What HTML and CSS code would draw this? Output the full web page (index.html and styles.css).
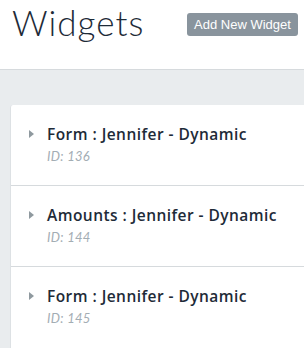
FILE: index.html
```html
<!DOCTYPE html>
<html>
<head>
<meta charset="utf-8">
<link rel="stylesheet" href="styles.css">
</head>
<body>
<header class="header">
  <h1 class="title">Widgets</h1>
  <button class="add-btn">Add New Widget</button>
</header>
<main class="content">
  <div class="card">
    <div class="row">
      <span class="caret"></span>
      <div class="info">
        <div class="name">Form : Jennifer - Dynamic</div>
        <div class="id">ID: 136</div>
      </div>
    </div>
    <div class="row">
      <span class="caret"></span>
      <div class="info">
        <div class="name">Amounts : Jennifer - Dynamic</div>
        <div class="id">ID: 144</div>
      </div>
    </div>
    <div class="row">
      <span class="caret"></span>
      <div class="info">
        <div class="name">Form : Jennifer - Dynamic</div>
        <div class="id">ID: 145</div>
      </div>
    </div>
  </div>
</main>
</body>
</html>
```

FILE: styles.css
```css
html, body {
  margin: 0;
  padding: 0;
  background: #ffffff;
  overflow: hidden;
}
body {
  width: 304px;
  height: 354px;
  font-family: Lato, "Open Sans", sans-serif;
}
.header {
  height: 70px;
  box-sizing: border-box;
  border-bottom: 1px solid #d6dadd;
  display: flex;
  align-items: flex-start;
  padding: 0 6px 0 12px;
  justify-content: space-between;
}
.title {
  margin: 0;
  font-family: Lato, sans-serif;
  font-weight: 300;
  font-size: 35px;
  line-height: 44px;
  color: #1e2b38;
  letter-spacing: 1px;
}
.add-btn {
  margin-top: 13px;
  height: 23px;
  width: 111px;
  border: none;
  border-radius: 3px;
  background: #89949d;
  color: #ffffff;
  font-family: "Liberation Sans", Arial, sans-serif;
  font-size: 13px;
  padding: 0;
}
.content {
  background: #e9ecee;
  padding: 35px 0 0 10px;
  height: 278px;
  box-sizing: border-box;
}
.card {
  background: #ffffff;
  border-radius: 3px 0 0 0;
  border-left: 1px solid #dde1e4;
  height: 243px;
}
.row {
  display: flex;
  align-items: flex-start;
  height: 81px;
  box-sizing: border-box;
  border-bottom: 1px solid #d6dadd;
  padding: 20px 0 0 18px;
}
.row:last-child {
  border-bottom: none;
}
.caret {
  width: 0;
  height: 0;
  border-top: 4px solid transparent;
  border-bottom: 4px solid transparent;
  border-left: 5px solid #8f999f;
  margin-top: 5px;
  margin-right: 13px;
}
.name {
  font-family: "Open Sans", sans-serif;
  font-weight: 600;
  font-size: 15.5px;
  line-height: 18px;
  letter-spacing: 0.45px;
  color: #1e2b38;
  white-space: nowrap;
}
.id {
  margin-top: 5px;
  font-family: Lato, sans-serif;
  font-style: italic;
  font-size: 13px;
  line-height: 16px;
  color: #a3adb4;
  letter-spacing: 0.3px;
}
```
